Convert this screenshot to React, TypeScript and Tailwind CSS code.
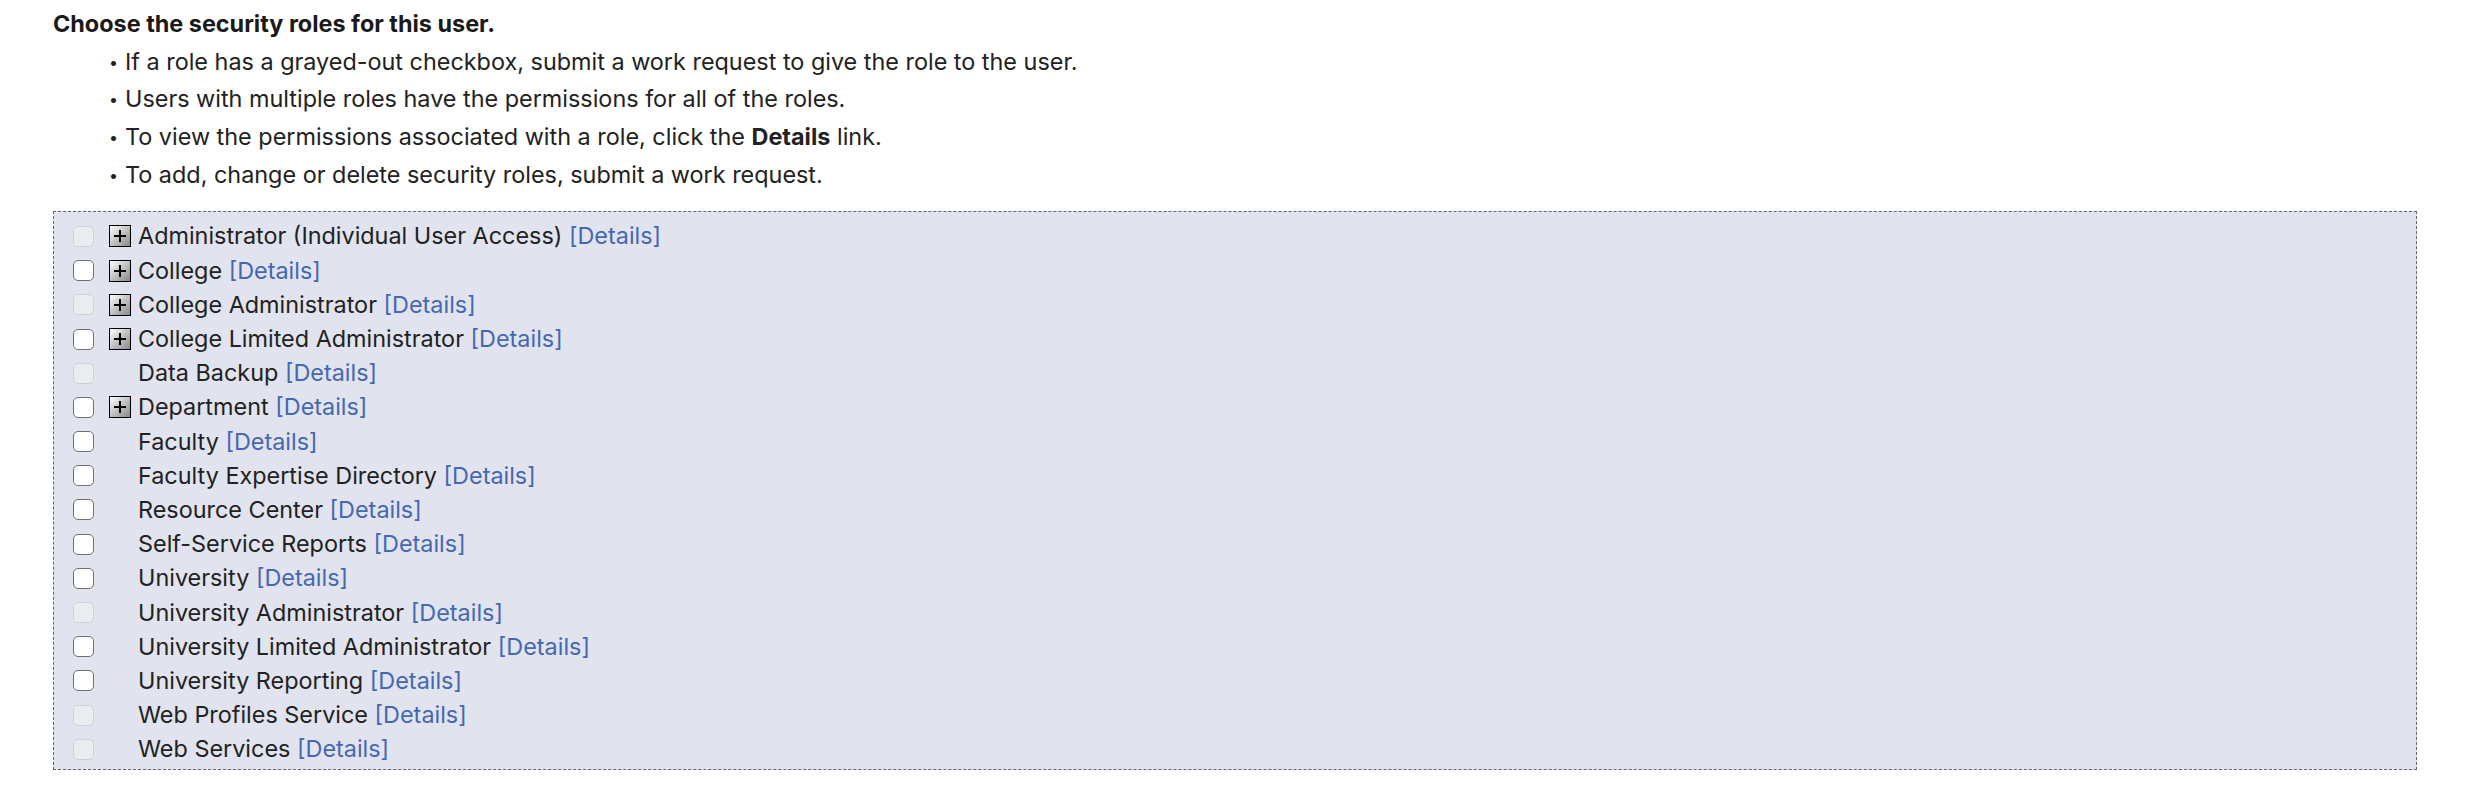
import React from "react";

type Role = {
  name: string;
  enabled: boolean;
  expandable: boolean;
};

const roles: Role[] = [
  { name: "Administrator (Individual User Access)", enabled: false, expandable: true },
  { name: "College", enabled: true, expandable: true },
  { name: "College Administrator", enabled: false, expandable: true },
  { name: "College Limited Administrator", enabled: true, expandable: true },
  { name: "Data Backup", enabled: false, expandable: false },
  { name: "Department", enabled: true, expandable: true },
  { name: "Faculty", enabled: true, expandable: false },
  { name: "Faculty Expertise Directory", enabled: true, expandable: false },
  { name: "Resource Center", enabled: true, expandable: false },
  { name: "Self-Service Reports", enabled: true, expandable: false },
  { name: "University", enabled: true, expandable: false },
  { name: "University Administrator", enabled: false, expandable: false },
  { name: "University Limited Administrator", enabled: true, expandable: false },
  { name: "University Reporting", enabled: true, expandable: false },
  { name: "Web Profiles Service", enabled: false, expandable: false },
  { name: "Web Services", enabled: false, expandable: false },
];

const ExpandIcon = () => (
  <span className="flex h-[22px] w-[22px] items-center justify-center border-[1.5px] border-black bg-gradient-to-br from-white to-[#8a8a8a]">
    <svg width="14" height="14" viewBox="0 0 14 14">
      <path d="M7 1v12M1 7h12" stroke="#000" strokeWidth="2" />
    </svg>
  </span>
);

const RoleRow = ({ role }: { role: Role }) => (
  <div className="flex h-[34.2px] items-center">
    <input
      type="checkbox"
      disabled={!role.enabled}
      className={
        role.enabled
          ? "m-0 h-[21px] w-[21px] shrink-0 appearance-none rounded-[5px] border-[1.5px] border-[#6f6f6f] bg-white"
          : "m-0 h-[21px] w-[21px] shrink-0 appearance-none rounded-[5px] border-[1.5px] border-[#cfd0d4] bg-[#ebecf0]"
      }
    />
    <span className="ml-[15px] flex w-[22px] shrink-0 justify-center">
      {role.expandable && <ExpandIcon />}
    </span>
    <span className="ml-[7px] whitespace-nowrap text-[#222]">
      {role.name} <a className="cursor-pointer text-[#4668b0]">[Details]</a>
    </span>
  </div>
);

export default function App() {
  return (
    <div
      className="bg-white px-[53px] pt-[9px] text-[23.4px] leading-[30px] text-[#222]"
      style={{ fontFamily: "Inter, 'Noto Sans', sans-serif" }}
    >
      <h2 className="m-0 text-[23.4px] font-bold leading-[30px] text-[#1a1a1a]">
        Choose the security roles for this user.
      </h2>
      <ul className="mt-[4px] pl-[56px]">
        {[
          <>If a role has a grayed-out checkbox, submit a work request to give the role to the user.</>,
          <>Users with multiple roles have the permissions for all of the roles.</>,
          <>
            To view the permissions associated with a role, click the <b>Details</b> link.
          </>,
          <>To add, change or delete security roles, submit a work request.</>,
        ].map((t, i) => (
          <li key={i} className="flex h-[37.6px] items-center">
            <span className="mr-[7px] text-[16px]">•</span>
            <span>{t}</span>
          </li>
        ))}
      </ul>
      <div className="mt-[18px] border-[1.5px] border-dashed border-[#666] bg-[#e1e4ee] pb-[3px] pl-[19px] pt-[7px]">
        {roles.map((r) => (
          <RoleRow key={r.name} role={r} />
        ))}
      </div>
    </div>
  );
}
